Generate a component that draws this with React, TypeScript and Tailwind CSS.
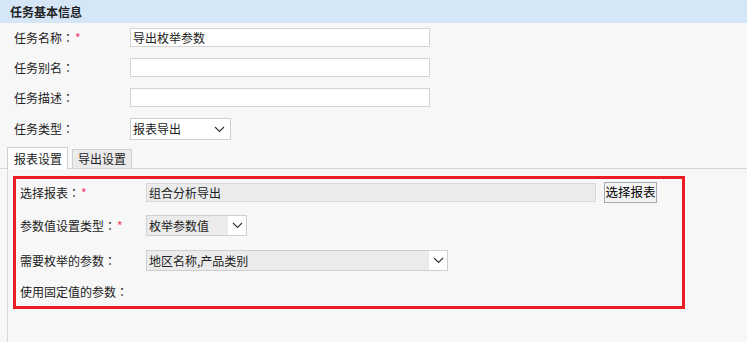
import React from "react";

const FONT = { fontFamily: '"Noto Sans CJK SC", "Noto Sans", sans-serif' };

function Chevron() {
  return (
    <svg width="11" height="7" viewBox="0 0 11 7" className="block">
      <polyline points="1,1 5.5,5.5 10,1" fill="none" stroke="#333" strokeWidth="1.1" />
    </svg>
  );
}

function Star() {
  return <span className="text-[#f4336a] ml-[1px]">*</span>;
}

// 冒号居中显示（TC 字形的全角冒号是居中的）
function Colon() {
  return <span className="font-['Noto_Sans_CJK_TC',sans-serif]">：</span>;
}

function Label({ text, required, width }: { text: string; required?: boolean; width: string }) {
  return (
    <div className={`${width} shrink-0 leading-none`}>
      {text}
      <Colon />
      {required && <Star />}
    </div>
  );
}

function TopRow({ label, required, children }: { label: string; required?: boolean; children: React.ReactNode }) {
  return (
    <div className="flex items-center">
      <Label text={label} required={required} width="w-[116px]" />
      {children}
    </div>
  );
}

function TextBox({ value }: { value?: string }) {
  return (
    <div className="w-[300px] h-[19px] border border-[#d4d4d4] bg-white px-[2px] flex items-center leading-none">
      {value}
    </div>
  );
}

function Combo({ value, width, gray }: { value: string; width: string; gray?: boolean }) {
  return (
    <div className={`${width} h-[21px] border border-[#cfcfcf] flex ${gray ? "bg-[#ebebeb]" : "bg-white"}`}>
      <div className="flex-1 flex items-center px-[2px] leading-none">{value}</div>
      <div className="w-[18px] bg-white flex items-center justify-center">
        <Chevron />
      </div>
    </div>
  );
}

function BoxRow({ label, required, children }: { label: string; required?: boolean; children?: React.ReactNode }) {
  return (
    <div className="flex items-center">
      <Label text={label} required={required} width="w-[126px]" />
      {children}
    </div>
  );
}

export default function App() {
  return (
    <div className="w-[747px] h-[342px] overflow-hidden bg-[#f7f7f7] text-[12px] text-[#222]" style={FONT}>
      <div className="h-[23px] bg-[#d5e6f7] pl-[10px] flex items-center font-bold leading-none">任务基本信息</div>

      <div className="pl-[14px] pt-[5px] flex flex-col">
        <TopRow label="任务名称" required>
          <TextBox value="导出枚举参数" />
        </TopRow>
        <div className="h-[11px]" />
        <TopRow label="任务别名">
          <TextBox />
        </TopRow>
        <div className="h-[11px]" />
        <TopRow label="任务描述">
          <TextBox />
        </TopRow>
        <div className="h-[11px]" />
        <TopRow label="任务类型">
          <div className="w-[101px] h-[22px] border border-[#cfcfcf] bg-white flex items-center justify-between pl-[2px] pr-[5px] leading-none">
            报表导出
            <Chevron />
          </div>
        </TopRow>
      </div>

      <div className="mt-[7px] flex items-end border-b border-[#d6d6d6] pl-[7px] h-[22px]">
        <div className="h-[22px] w-[61px] mb-[-1px] border border-b-0 border-[#d0d0d0] bg-white flex items-center pl-[6px] leading-none">
          报表设置
        </div>
        <div className="h-[19px] w-[60px] ml-[4px] border border-b-0 border-[#d0d0d0] bg-[#ebebeb] flex items-center pl-[5px] leading-none">
          导出设置
        </div>
      </div>

      <div className="ml-[7px] border-l border-[#d9d9d9] h-[200px] pl-[5px] pt-[7px]">
        <div className="w-[672px] h-[133px] border-[3px] border-[#ec1c24] pl-[4px] pt-[3px] flex flex-col">
          <BoxRow label="选择报表" required>
            <div className="w-[450px] h-[19px] border border-[#d8d8d8] bg-[#ebebeb] flex items-center px-[2px] leading-none">
              组合分析导出
            </div>
            <div className="ml-[8px] h-[21px] w-[53px] border border-[#a3acb6] bg-[#f4f4f4] flex items-center justify-center text-[12.5px] leading-none text-black">
              选择报表
            </div>
          </BoxRow>
          <div className="h-[12px]" />
          <BoxRow label="参数值设置类型" required>
            <Combo value="枚举参数值" width="w-[101px]" gray />
          </BoxRow>
          <div className="h-[14px]" />
          <BoxRow label="需要枚举的参数">
            <Combo value="地区名称,产品类别" width="w-[302px]" gray />
          </BoxRow>
          <div className="h-[13px]" />
          <BoxRow label="使用固定值的参数">
            <div className="h-[16px]" />
          </BoxRow>
        </div>
      </div>
    </div>
  );
}
